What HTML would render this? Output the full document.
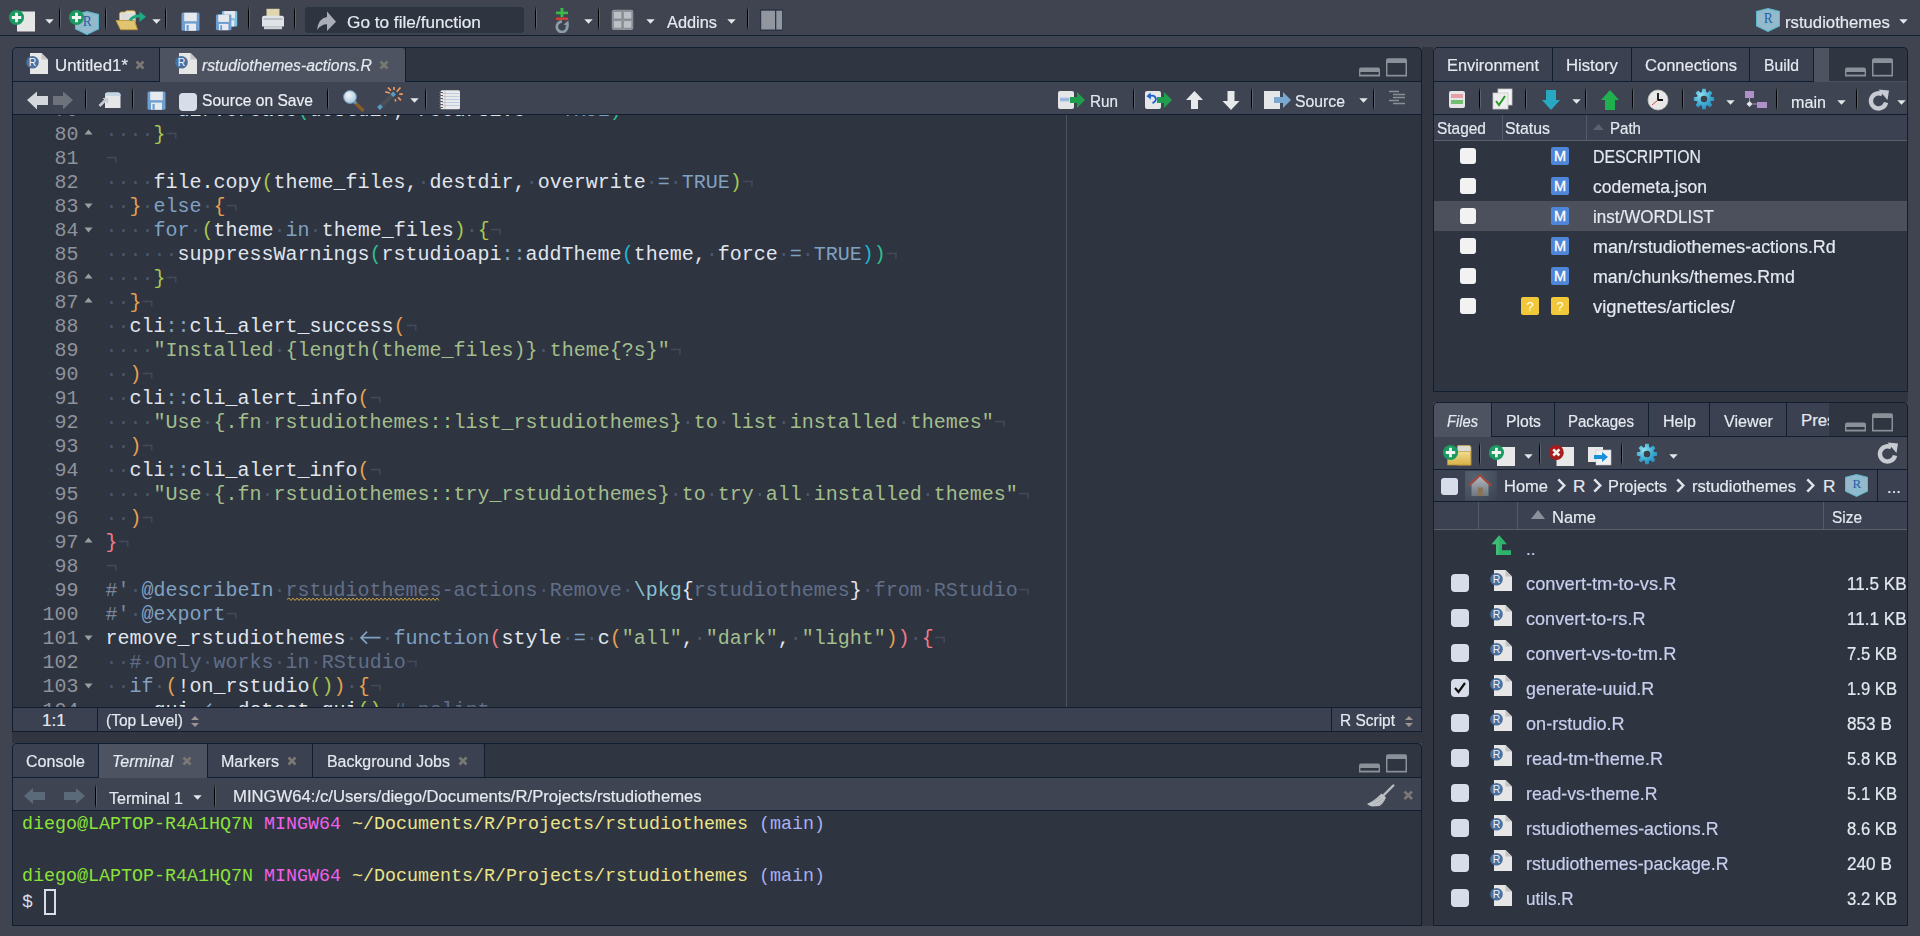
<!DOCTYPE html><html><head><meta charset="utf-8"><style>
*{margin:0;padding:0;box-sizing:border-box}
html,body{width:1920px;height:936px;overflow:hidden;background:#3f4450}
body{position:relative;font-family:"Liberation Sans",sans-serif}
.a{position:absolute;display:block}
.t{position:absolute;white-space:pre;font-family:"Liberation Sans",sans-serif;-webkit-text-stroke:0.2px currentColor}
.m{position:absolute;white-space:pre;font-family:"Liberation Mono",monospace}
</style></head><body><div class="a" style="left:0px;top:0px;width:1920px;height:35px;background:#3f4450;"></div>
<div class="a" style="left:0px;top:35px;width:1920px;height:1px;background:#101e2f;"></div>
<svg class="a" style="left:8px;top:9px;" width="30" height="24" viewBox="0 0 30 24"><rect x="9" y="2.5" width="18" height="20" fill="#e6e6e6"/><circle cx="8.5" cy="8.5" r="7.6" fill="#1a9a60"/><path d="M8.5 3.8V13.2M3.8 8.5H13.2" stroke="#f2f2f2" stroke-width="2.8"/></svg>
<svg class="a" style="left:45px;top:19px;" width="9" height="5" viewBox="0 0 9 5"><path d="M0.3 0.3H8.7L4.5 4.7Z" fill="#e4e6ea"/></svg>
<div class="a" style="left:59px;top:6px;width:3px;height:25px;background:linear-gradient(90deg,#000 0,#000 1.4px,rgba(160,168,180,0.3) 1.4px,rgba(160,168,180,0.3) 2.4px,transparent 2.4px);-webkit-mask-image:linear-gradient(180deg,transparent 0,#000 22%,#000 78%,transparent 100%)"></div>
<svg class="a" style="left:75px;top:11px;" width="24" height="24" viewBox="0 0 24 24"><g transform="scale(1.0435)"><path d="M11.5 0.5L22.5 3.3V17.2L11.5 22.5L0.5 17.2V3.3Z" fill="#a6cfe0" fill-opacity="0.85" stroke="#5cb6cc" stroke-width="1"/>
<path d="M0.5 3.3L11.5 6L22.5 3.3M11.5 1V22.5M0.5 17.2L11.5 14.5L22.5 17.2" stroke="#6cc0d4" stroke-width="0.6" fill="none" opacity="0.8"/>
<text x="11.8" y="14" text-anchor="middle" font-family="Liberation Serif" font-size="13" fill="#2a5ba8">R</text></g></svg>
<svg class="a" style="left:68px;top:9px;" width="17" height="17" viewBox="0 0 17 17"><circle cx="8.5" cy="8.5" r="7.6" fill="#1a9a60"/><path d="M8.5 3.8V13.2M3.8 8.5H13.2" stroke="#f2f2f2" stroke-width="2.8"/></svg>
<div class="a" style="left:105px;top:6px;width:3px;height:25px;background:linear-gradient(90deg,#000 0,#000 1.4px,rgba(160,168,180,0.3) 1.4px,rgba(160,168,180,0.3) 2.4px,transparent 2.4px);-webkit-mask-image:linear-gradient(180deg,transparent 0,#000 22%,#000 78%,transparent 100%)"></div>
<svg class="a" style="left:114px;top:10px;" width="34" height="22" viewBox="0 0 34 22"><path d="M5.5 4Q5.5 2 7.5 2H11L12.5 0.8H19.5Q21.5 0.8 21.5 3V12H5.5Z" fill="#f0e8c8" stroke="#c8a040" stroke-width="0.9"/>
<rect x="6.8" y="2.8" width="14" height="11" fill="#dcdcdc"/>
<path d="M2 10.5H20.5L23.5 19.7H6.5Z" fill="#e0c470" stroke="#c09838" stroke-width="0.9"/>
<path d="M16 10.5Q19 5.8 26 6" stroke="#20a880" stroke-width="3.2" fill="none"/><path d="M25.5 1.5L32 6.8L25.5 12Z" fill="#20a880"/></svg>
<svg class="a" style="left:152px;top:19px;" width="9" height="5" viewBox="0 0 9 5"><path d="M0.3 0.3H8.7L4.5 4.7Z" fill="#e4e6ea"/></svg>
<div class="a" style="left:165px;top:6px;width:3px;height:25px;background:linear-gradient(90deg,#000 0,#000 1.4px,rgba(160,168,180,0.3) 1.4px,rgba(160,168,180,0.3) 2.4px,transparent 2.4px);-webkit-mask-image:linear-gradient(180deg,transparent 0,#000 22%,#000 78%,transparent 100%)"></div>
<svg class="a" style="left:181px;top:12px;" width="20" height="20" viewBox="0 0 20 20"><rect x="0.5" y="0.5" width="18" height="18.3" rx="1.5" fill="#6f9fd0"/><rect x="3.2" y="0.8" width="12.6" height="8.4" fill="#e6e9ee"/><rect x="4" y="11.6" width="11" height="7.2" fill="#e6e9ee"/><rect x="5.5" y="13" width="2.2" height="5.8" fill="#6f9fd0"/></svg>
<svg class="a" style="left:215px;top:9px;" width="26" height="24" viewBox="0 0 26 24"><g transform="translate(6.5,1.5) scale(0.85)"><rect x="0.5" y="0.5" width="18" height="18.3" rx="1.5" fill="#7cc2e4"/><rect x="3.2" y="0.8" width="12.6" height="8.4" fill="#e6e9ee"/><rect x="4" y="11.6" width="11" height="7.2" fill="#e6e9ee"/></g><g transform="translate(0.5,5) scale(0.86)"><rect x="0.5" y="0.5" width="18" height="18.3" rx="1.5" fill="#6f9fd0"/><rect x="3.2" y="0.8" width="12.6" height="8.4" fill="#e6e9ee"/><rect x="4" y="11.6" width="11" height="7.2" fill="#e6e9ee"/><rect x="5.5" y="13" width="2.2" height="5.8" fill="#6f9fd0"/></g></svg>
<div class="a" style="left:248px;top:6px;width:3px;height:25px;background:linear-gradient(90deg,#000 0,#000 1.4px,rgba(160,168,180,0.3) 1.4px,rgba(160,168,180,0.3) 2.4px,transparent 2.4px);-webkit-mask-image:linear-gradient(180deg,transparent 0,#000 22%,#000 78%,transparent 100%)"></div>
<svg class="a" style="left:261px;top:7px;" width="24" height="24" viewBox="0 0 24 24"><rect x="5.5" y="1.8" width="13" height="10.5" fill="#e2d6ae"/><path d="M1 11Q1 8.8 3 8.8H21Q23 8.8 23 11V19.5H1Z" fill="#dfe2e6"/><rect x="2.5" y="11.5" width="19" height="1" fill="#9aa0a8"/><rect x="3" y="19.2" width="18" height="3" fill="#cdd1d6"/></svg>
<div class="a" style="left:294px;top:6px;width:3px;height:25px;background:linear-gradient(90deg,#000 0,#000 1.4px,rgba(160,168,180,0.3) 1.4px,rgba(160,168,180,0.3) 2.4px,transparent 2.4px);-webkit-mask-image:linear-gradient(180deg,transparent 0,#000 22%,#000 78%,transparent 100%)"></div>
<div class="a" style="left:305px;top:7px;width:219px;height:26px;background:#2e3440;border-radius:4px;box-shadow:inset 0 0 0 1px #2a3644"></div>
<svg class="a" style="left:316px;top:11px;" width="22" height="22" viewBox="0 0 22 22"><path d="M1 19Q2.5 7 11 6V0.5L20 10.8L11 20V13.3Q5 13.3 1 19Z" fill="#a9aeb6"/></svg>
<div class="t" style="left:347.00px;top:14.34px;font-size:17.200px;line-height:17.200px;color:#e5e9f0;transform:scaleX(1.0011);transform-origin:0 0;">Go to file/function</div>
<div class="a" style="left:535px;top:6px;width:3px;height:25px;background:linear-gradient(90deg,#000 0,#000 1.4px,rgba(160,168,180,0.3) 1.4px,rgba(160,168,180,0.3) 2.4px,transparent 2.4px);-webkit-mask-image:linear-gradient(180deg,transparent 0,#000 22%,#000 78%,transparent 100%)"></div>
<svg class="a" style="left:555px;top:7px;" width="16" height="26" viewBox="0 0 16 26"><rect x="5.5" y="1" width="2.9" height="9" fill="#3cb84a"/><rect x="1" y="4.6" width="12" height="2.6" fill="#3cb84a"/><rect x="1" y="10.5" width="12" height="2.6" fill="#d0403a"/>
<path d="M7 14.6A5.2 5.2 0 1 0 12 18.5" stroke="#8c9ca8" stroke-width="2.7" fill="none"/><path d="M8.6 17.5L13.4 13.6L14 19.6Z" fill="#8c9ca8"/></svg>
<svg class="a" style="left:584px;top:19px;" width="9" height="5" viewBox="0 0 9 5"><path d="M0.3 0.3H8.7L4.5 4.7Z" fill="#e4e6ea"/></svg>
<div class="a" style="left:598px;top:6px;width:3px;height:25px;background:linear-gradient(90deg,#000 0,#000 1.4px,rgba(160,168,180,0.3) 1.4px,rgba(160,168,180,0.3) 2.4px,transparent 2.4px);-webkit-mask-image:linear-gradient(180deg,transparent 0,#000 22%,#000 78%,transparent 100%)"></div>
<svg class="a" style="left:611px;top:9px;" width="24" height="22" viewBox="0 0 24 22"><rect x="0.8" y="0.8" width="21.5" height="20.3" rx="2" fill="#8e9299"/>
<rect x="2.4" y="2.4" width="8.4" height="7.6" rx="1.2" fill="#bcc0c6" stroke="#777c84" stroke-width="0.6"/><rect x="12.4" y="2.4" width="8.4" height="7.6" rx="1.2" fill="#bcc0c6" stroke="#777c84" stroke-width="0.6"/>
<rect x="2.4" y="11.6" width="8.4" height="7.6" rx="1.2" fill="#bcc0c6" stroke="#777c84" stroke-width="0.6"/><rect x="12.4" y="11.6" width="8.4" height="7.6" rx="1.2" fill="#bcc0c6" stroke="#777c84" stroke-width="0.6"/></svg>
<svg class="a" style="left:646px;top:19px;" width="9" height="5" viewBox="0 0 9 5"><path d="M0.3 0.3H8.7L4.5 4.7Z" fill="#e4e6ea"/></svg>
<div class="t" style="left:667.00px;top:14.34px;font-size:17.200px;line-height:17.200px;color:#e5e9f0;transform:scaleX(0.9507);transform-origin:0 0;">Addins</div>
<svg class="a" style="left:727px;top:19px;" width="9" height="5" viewBox="0 0 9 5"><path d="M0.3 0.3H8.7L4.5 4.7Z" fill="#e4e6ea"/></svg>
<div class="a" style="left:747px;top:6px;width:3px;height:25px;background:linear-gradient(90deg,#000 0,#000 1.4px,rgba(160,168,180,0.3) 1.4px,rgba(160,168,180,0.3) 2.4px,transparent 2.4px);-webkit-mask-image:linear-gradient(180deg,transparent 0,#000 22%,#000 78%,transparent 100%)"></div>
<svg class="a" style="left:760px;top:9px;" width="23" height="22" viewBox="0 0 23 22"><rect x="0" y="0" width="23" height="22" fill="#2c3646"/><rect x="1.2" y="1.7" width="13.8" height="18.8" fill="#92969e"/><rect x="16.3" y="1.7" width="5.8" height="18.8" fill="#92969e"/></svg>
<svg class="a" style="left:1756px;top:8px;" width="24" height="24" viewBox="0 0 24 24"><g transform="scale(1.0435)"><path d="M11.5 0.5L22.5 3.3V17.2L11.5 22.5L0.5 17.2V3.3Z" fill="#a6cfe0" fill-opacity="0.85" stroke="#5cb6cc" stroke-width="1"/>
<path d="M0.5 3.3L11.5 6L22.5 3.3M11.5 1V22.5M0.5 17.2L11.5 14.5L22.5 17.2" stroke="#6cc0d4" stroke-width="0.6" fill="none" opacity="0.8"/>
<text x="11.8" y="14" text-anchor="middle" font-family="Liberation Serif" font-size="13" fill="#2a5ba8">R</text></g></svg>
<div class="t" style="left:1785.00px;top:14.34px;font-size:17.200px;line-height:17.200px;color:#e5e9f0;transform:scaleX(0.9719);transform-origin:0 0;">rstudiothemes</div>
<svg class="a" style="left:1899px;top:19px;" width="9" height="5" viewBox="0 0 9 5"><path d="M0.3 0.3H8.7L4.5 4.7Z" fill="#e4e6ea"/></svg>
<div class="a" style="left:1422px;top:47px;width:11px;height:879px;background:#30353f;"></div>
<div class="a" style="left:12px;top:732px;width:1421px;height:11px;background:#30353f;"></div>
<div class="a" style="left:1422px;top:392px;width:486px;height:10px;background:#30353f;"></div>
<div class="a" style="left:12px;top:47px;width:1410px;height:685px;background:#101e2f;border-radius:5px 5px 0 0"></div>
<div class="a" style="left:13px;top:48px;width:1408px;height:33px;background:#2f3541;border-radius:4px 4px 0 0"></div>
<div class="a" style="left:13px;top:48px;width:146px;height:33px;background:#3b4150;border-top-left-radius:4px"></div>
<div class="a" style="left:159px;top:48px;width:1px;height:33px;background:#101e2f;"></div>
<div class="a" style="left:160px;top:48px;width:245px;height:34px;background:#4d5360;border-top-right-radius:3px"></div>
<div class="a" style="left:405px;top:48px;width:1px;height:33px;background:#101e2f;"></div>
<svg class="a" style="left:26px;top:52px;" width="22" height="23" viewBox="0 0 22 23"><path d="M4 1H15.5L22 7.5V22H4Z" fill="#e6e6e6"/><path d="M15.5 1V7.5H22" fill="#c4c4c4"/><circle cx="6.5" cy="10.2" r="6.3" fill="#4a70a0"/><text x="6.5" y="14" text-anchor="middle" font-family="Liberation Sans" font-size="10.5" fill="#eef2f6">R</text></svg>
<div class="t" style="left:55.00px;top:57.34px;font-size:17.200px;line-height:17.200px;color:#e5e9f0;transform:scaleX(0.9788);transform-origin:0 0;">Untitled1*</div>
<svg class="a" style="left:135px;top:60px;" width="10" height="10" viewBox="0 0 10 10"><path d="M1.5 1.5L8.5 8.5M8.5 1.5L1.5 8.5" stroke="#7a7873" stroke-width="2.7"/></svg>
<svg class="a" style="left:175px;top:52px;" width="22" height="23" viewBox="0 0 22 23"><path d="M4 1H15.5L22 7.5V22H4Z" fill="#e6e6e6"/><path d="M15.5 1V7.5H22" fill="#c4c4c4"/><circle cx="6.5" cy="10.2" r="6.3" fill="#4a70a0"/><text x="6.5" y="14" text-anchor="middle" font-family="Liberation Sans" font-size="10.5" fill="#eef2f6">R</text></svg>
<div class="t" style="left:202.00px;top:57.34px;font-size:17.200px;line-height:17.200px;color:#e5e9f0;font-style:italic;transform:scaleX(0.9166);transform-origin:0 0;">rstudiothemes-actions.R</div>
<svg class="a" style="left:379px;top:60px;" width="10" height="10" viewBox="0 0 10 10"><path d="M1.5 1.5L8.5 8.5M8.5 1.5L1.5 8.5" stroke="#7a7873" stroke-width="2.7"/></svg>
<svg class="a" style="left:1359px;top:67px;" width="22" height="10" viewBox="0 0 22 10"><path d="M0 9.6V2.5Q0 0.5 2 0.5H19Q21 0.5 21 2.5V9.6Z" fill="#8a9199"/><rect x="1.4" y="5" width="18.2" height="2.6" fill="#2f3541"/></svg>
<svg class="a" style="left:1386px;top:58px;" width="22" height="19" viewBox="0 0 22 19"><path d="M0 18.6V2.3Q0 0.3 2 0.3H19Q21 0.3 21 2.3V18.6Z" fill="#8a9199"/><rect x="1.5" y="5" width="18" height="11.8" fill="#2f3541"/></svg>
<div class="a" style="left:13px;top:82px;width:1408px;height:32px;background:#3e4451;"></div>
<svg class="a" style="left:26px;top:90px;" width="48" height="21" viewBox="0 0 48 21"><path d="M1 10L11 1.5V6H22V15H11V19.5Z" fill="#d4d7db"/><path d="M47 10L37 1.5V6H27V15H37V19.5Z" fill="#6e737b"/></svg>
<div class="a" style="left:85px;top:87px;width:3px;height:24px;background:linear-gradient(90deg,#000 0,#000 1.4px,rgba(160,168,180,0.3) 1.4px,rgba(160,168,180,0.3) 2.4px,transparent 2.4px);-webkit-mask-image:linear-gradient(180deg,transparent 0,#000 22%,#000 78%,transparent 100%)"></div>
<svg class="a" style="left:97px;top:89px;" width="25" height="22" viewBox="0 0 25 22"><path d="M8 19V6Q8 3.5 10.5 3.5H21Q23.5 3.5 23.5 6V19Z" fill="#e4e6e8"/><path d="M8 7V6Q8 3.5 10.5 3.5H21Q23.5 3.5 23.5 6V7Z" fill="#c2d6e6"/><path d="M2.5 17L9.5 10" stroke="#c8ccd0" stroke-width="2.6"/><path d="M5.5 9H11.2V14.7Z" fill="#c8ccd0"/></svg>
<div class="a" style="left:132px;top:87px;width:3px;height:24px;background:linear-gradient(90deg,#000 0,#000 1.4px,rgba(160,168,180,0.3) 1.4px,rgba(160,168,180,0.3) 2.4px,transparent 2.4px);-webkit-mask-image:linear-gradient(180deg,transparent 0,#000 22%,#000 78%,transparent 100%)"></div>
<svg class="a" style="left:147px;top:91px;" width="20" height="20" viewBox="0 0 20 20"><rect x="0.5" y="0.5" width="18" height="18.3" rx="1.5" fill="#6f9fd0"/><rect x="3.2" y="0.8" width="12.6" height="8.4" fill="#e6e9ee"/><rect x="4" y="11.6" width="11" height="7.2" fill="#e6e9ee"/><rect x="5.5" y="13" width="2.2" height="5.8" fill="#6f9fd0"/></svg>
<div class="a" style="left:179px;top:93px;width:18px;height:18px;background:#d8dee9;border-radius:4px"></div>
<div class="t" style="left:202.00px;top:92.34px;font-size:17.200px;line-height:17.200px;color:#eceff4;transform:scaleX(0.9069);transform-origin:0 0;">Source on Save</div>
<div class="a" style="left:327px;top:87px;width:3px;height:24px;background:linear-gradient(90deg,#000 0,#000 1.4px,rgba(160,168,180,0.3) 1.4px,rgba(160,168,180,0.3) 2.4px,transparent 2.4px);-webkit-mask-image:linear-gradient(180deg,transparent 0,#000 22%,#000 78%,transparent 100%)"></div>
<svg class="a" style="left:342px;top:89px;" width="24" height="24" viewBox="0 0 24 24"><defs><radialGradient id="lg" cx="0.4" cy="0.35" r="0.7"><stop offset="0" stop-color="#f2f6f9"/><stop offset="1" stop-color="#a8c4dc"/></radialGradient></defs><path d="M12.5 13L20.5 21" stroke="#8a5a28" stroke-width="3.2" stroke-linecap="round"/><path d="M12 12.5L14 14.5" stroke="#5a9ac0" stroke-width="3"/><circle cx="8" cy="8" r="6.4" fill="url(#lg)" stroke="#6f9ab8" stroke-width="1"/></svg>
<svg class="a" style="left:376px;top:85px;" width="28" height="27" viewBox="0 0 28 27"><path d="M2.5 23.5L18.5 8" stroke="#4a4f56" stroke-width="4"/><path d="M2.5 23.5L5.5 20.6M15.8 10.6L18.5 8" stroke="#5a9ac4" stroke-width="4"/><path d="M12 2.5L15 5.6M18 2V5M24.5 2.5L20.6 6.8M23.3 9.2H26.8M22 12.3L24.9 15.4M19 14.2L19.8 16.6M9.2 6.8L13.9 8" stroke="#f09a60" stroke-width="1.7"/></svg>
<svg class="a" style="left:410px;top:98px;" width="9" height="5" viewBox="0 0 9 5"><path d="M0.3 0.3H8.7L4.5 4.7Z" fill="#e4e6ea"/></svg>
<div class="a" style="left:425px;top:87px;width:3px;height:24px;background:linear-gradient(90deg,#000 0,#000 1.4px,rgba(160,168,180,0.3) 1.4px,rgba(160,168,180,0.3) 2.4px,transparent 2.4px);-webkit-mask-image:linear-gradient(180deg,transparent 0,#000 22%,#000 78%,transparent 100%)"></div>
<svg class="a" style="left:438px;top:89px;" width="23" height="22" viewBox="0 0 23 22"><rect x="2.5" y="1.2" width="19.5" height="19" rx="1.5" fill="#e8eaec"/><path d="M4 4.5H21.5M4 7.5H21.5M4 10.5H21.5M4 13.5H21.5M4 16.5H21.5" stroke="#a8c0d8" stroke-width="0.7"/><path d="M7 1.5V20" stroke="#e8a0a0" stroke-width="0.6"/><path d="M1 3.5H5M1 6.5H5M1 9.5H5M1 12.5H5M1 15.5H5M1 18.5H5" stroke="#5a5f66" stroke-width="1.2"/></svg>
<svg class="a" style="left:1057px;top:90px;" width="30" height="20" viewBox="0 0 30 20"><rect x="1" y="1" width="16" height="18" rx="2" fill="#e4e6e8"/><rect x="3" y="7.5" width="9.5" height="4" fill="#a8c0e4"/><path d="M3.5 9.5H12" stroke="#7f9fd0" stroke-width="0.6"/><path d="M13 7H20V2L28 10L20 18V13H13Z" fill="#1f9e4e"/></svg>
<div class="t" style="left:1090.00px;top:93.34px;font-size:17.200px;line-height:17.200px;color:#e5e9f0;transform:scaleX(0.8874);transform-origin:0 0;">Run</div>
<div class="a" style="left:1133px;top:87px;width:3px;height:24px;background:linear-gradient(90deg,#000 0,#000 1.4px,rgba(160,168,180,0.3) 1.4px,rgba(160,168,180,0.3) 2.4px,transparent 2.4px);-webkit-mask-image:linear-gradient(180deg,transparent 0,#000 22%,#000 78%,transparent 100%)"></div>
<svg class="a" style="left:1144px;top:90px;" width="30" height="20" viewBox="0 0 30 20"><rect x="1" y="1" width="16" height="18" rx="2" fill="#e4e6e8"/><path d="M5 6Q11 4.5 11.8 8.5Q12.3 11.5 8.5 13" stroke="#1f5fd0" stroke-width="1.9" fill="none"/><path d="M2.5 6.2L6.5 2.5L7 9.5Z" fill="#1f5fd0"/><path d="M13 7H20V2L28 10L20 18V13H13Z" fill="#1f9e4e"/></svg>
<svg class="a" style="left:1185px;top:90px;" width="19" height="20" viewBox="0 0 19 20"><path d="M9.5 1L18 10H13V19H6V10H1Z" fill="#e6e8ea"/></svg>
<svg class="a" style="left:1221px;top:90px;" width="20" height="21" viewBox="0 0 20 21"><path d="M10 20L1.5 11H6.5V1H13.5V11H18.5Z" fill="#e6e8ea"/></svg>
<div class="a" style="left:1251px;top:87px;width:3px;height:24px;background:linear-gradient(90deg,#000 0,#000 1.4px,rgba(160,168,180,0.3) 1.4px,rgba(160,168,180,0.3) 2.4px,transparent 2.4px);-webkit-mask-image:linear-gradient(180deg,transparent 0,#000 22%,#000 78%,transparent 100%)"></div>
<svg class="a" style="left:1263px;top:90px;" width="30" height="20" viewBox="0 0 30 20"><rect x="1" y="1" width="16" height="18" fill="#e4e6e8"/><path d="M11 7H20V2L28 10L20 18V13H11Z" fill="#7aa8d0"/></svg>
<div class="t" style="left:1295.00px;top:93.34px;font-size:17.200px;line-height:17.200px;color:#e5e9f0;transform:scaleX(0.9174);transform-origin:0 0;">Source</div>
<svg class="a" style="left:1359px;top:98px;" width="9" height="5" viewBox="0 0 9 5"><path d="M0.3 0.3H8.7L4.5 4.7Z" fill="#e4e6ea"/></svg>
<div class="a" style="left:1373px;top:87px;width:3px;height:24px;background:linear-gradient(90deg,#000 0,#000 1.4px,rgba(160,168,180,0.3) 1.4px,rgba(160,168,180,0.3) 2.4px,transparent 2.4px);-webkit-mask-image:linear-gradient(180deg,transparent 0,#000 22%,#000 78%,transparent 100%)"></div>
<svg class="a" style="left:1389px;top:90px;" width="18" height="16" viewBox="0 0 18 16"><path d="M0 1.5H10M4 4.5H16M4 7.5H16M0 10.5H10M4 13.5H16" stroke="#8b8f95" stroke-width="1.4"/></svg>
<div class="a" style="left:13px;top:115px;width:1408px;height:592px;background:#2e3440;"></div>
<div class="a" style="left:1066px;top:115px;width:1px;height:592px;background:#4a5160;"></div>
<div class="a" style="left:13px;top:115px;width:1052px;height:592px;overflow:hidden">
<div class="m" style="left:29.5px;top:-14.32px;width:36px;text-align:right;font-size:20px;line-height:20px;color:#8e939b">79</div>
<div class="m" style="left:92.5px;top:-14.32px;font-size:20px;line-height:20px"><span style="color:#4c566a">······</span><span style="color:#e0e5ee">dir.create</span><span style="color:#2fc08c">(</span><span style="color:#e0e5ee">destdir,<span style="color:#4c566a">·</span>recursive<span style="color:#4c566a">·</span></span><span style="color:#81a1c1">=</span><span style="color:#e0e5ee"><span style="color:#4c566a">·</span></span><span style="color:#81a1c1">TRUE</span><span style="color:#2fc08c">)</span><span style="color:#434b5a">¬</span></div>
<div class="m" style="left:29.5px;top:9.68px;width:36px;text-align:right;font-size:20px;line-height:20px;color:#8e939b">80</div>
<svg class="a" style="left:71px;top:14px" width="9" height="6"><path d="M0.5 5.5L4.5 0.5L8.5 5.5Z" fill="#9c9d9f"/></svg>
<div class="m" style="left:92.5px;top:9.68px;font-size:20px;line-height:20px"><span style="color:#4c566a">····</span><span style="color:#a8c650">}</span><span style="color:#434b5a">¬</span></div>
<div class="m" style="left:29.5px;top:33.68px;width:36px;text-align:right;font-size:20px;line-height:20px;color:#8e939b">81</div>
<div class="m" style="left:92.5px;top:33.68px;font-size:20px;line-height:20px"><span style="color:#4c566a"></span><span style="color:#434b5a">¬</span></div>
<div class="m" style="left:29.5px;top:57.68px;width:36px;text-align:right;font-size:20px;line-height:20px;color:#8e939b">82</div>
<div class="m" style="left:92.5px;top:57.68px;font-size:20px;line-height:20px"><span style="color:#4c566a">····</span><span style="color:#e0e5ee">file.copy</span><span style="color:#a8c650">(</span><span style="color:#e0e5ee">theme_files,<span style="color:#4c566a">·</span>destdir,<span style="color:#4c566a">·</span>overwrite<span style="color:#4c566a">·</span></span><span style="color:#81a1c1">=</span><span style="color:#e0e5ee"><span style="color:#4c566a">·</span></span><span style="color:#81a1c1">TRUE</span><span style="color:#a8c650">)</span><span style="color:#434b5a">¬</span></div>
<div class="m" style="left:29.5px;top:81.68px;width:36px;text-align:right;font-size:20px;line-height:20px;color:#8e939b">83</div>
<svg class="a" style="left:71px;top:88px" width="9" height="6"><path d="M0.5 0.5H8.5L4.5 5.5Z" fill="#9c9d9f"/></svg>
<div class="m" style="left:92.5px;top:81.68px;font-size:20px;line-height:20px"><span style="color:#4c566a">··</span><span style="color:#e5a050">}</span><span style="color:#e0e5ee"><span style="color:#4c566a">·</span></span><span style="color:#81a1c1">else</span><span style="color:#e0e5ee"><span style="color:#4c566a">·</span></span><span style="color:#e5a050">{</span><span style="color:#434b5a">¬</span></div>
<div class="m" style="left:29.5px;top:105.68px;width:36px;text-align:right;font-size:20px;line-height:20px;color:#8e939b">84</div>
<svg class="a" style="left:71px;top:112px" width="9" height="6"><path d="M0.5 0.5H8.5L4.5 5.5Z" fill="#9c9d9f"/></svg>
<div class="m" style="left:92.5px;top:105.68px;font-size:20px;line-height:20px"><span style="color:#4c566a">····</span><span style="color:#81a1c1">for</span><span style="color:#e0e5ee"><span style="color:#4c566a">·</span></span><span style="color:#a8c650">(</span><span style="color:#e0e5ee">theme<span style="color:#4c566a">·</span></span><span style="color:#81a1c1">in</span><span style="color:#e0e5ee"><span style="color:#4c566a">·</span>theme_files</span><span style="color:#a8c650">)</span><span style="color:#e0e5ee"><span style="color:#4c566a">·</span></span><span style="color:#a8c650">{</span><span style="color:#434b5a">¬</span></div>
<div class="m" style="left:29.5px;top:129.68px;width:36px;text-align:right;font-size:20px;line-height:20px;color:#8e939b">85</div>
<div class="m" style="left:92.5px;top:129.68px;font-size:20px;line-height:20px"><span style="color:#4c566a">······</span><span style="color:#e0e5ee">suppressWarnings</span><span style="color:#2fc08c">(</span><span style="color:#e0e5ee">rstudioapi</span><span style="color:#81a1c1">::</span><span style="color:#e0e5ee">addTheme</span><span style="color:#20b4d4">(</span><span style="color:#e0e5ee">theme,<span style="color:#4c566a">·</span>force<span style="color:#4c566a">·</span></span><span style="color:#81a1c1">=</span><span style="color:#e0e5ee"><span style="color:#4c566a">·</span></span><span style="color:#81a1c1">TRUE</span><span style="color:#20b4d4">)</span><span style="color:#2fc08c">)</span><span style="color:#434b5a">¬</span></div>
<div class="m" style="left:29.5px;top:153.68px;width:36px;text-align:right;font-size:20px;line-height:20px;color:#8e939b">86</div>
<svg class="a" style="left:71px;top:158px" width="9" height="6"><path d="M0.5 5.5L4.5 0.5L8.5 5.5Z" fill="#9c9d9f"/></svg>
<div class="m" style="left:92.5px;top:153.68px;font-size:20px;line-height:20px"><span style="color:#4c566a">····</span><span style="color:#a8c650">}</span><span style="color:#434b5a">¬</span></div>
<div class="m" style="left:29.5px;top:177.68px;width:36px;text-align:right;font-size:20px;line-height:20px;color:#8e939b">87</div>
<svg class="a" style="left:71px;top:182px" width="9" height="6"><path d="M0.5 5.5L4.5 0.5L8.5 5.5Z" fill="#9c9d9f"/></svg>
<div class="m" style="left:92.5px;top:177.68px;font-size:20px;line-height:20px"><span style="color:#4c566a">··</span><span style="color:#e5a050">}</span><span style="color:#434b5a">¬</span></div>
<div class="m" style="left:29.5px;top:201.68px;width:36px;text-align:right;font-size:20px;line-height:20px;color:#8e939b">88</div>
<div class="m" style="left:92.5px;top:201.68px;font-size:20px;line-height:20px"><span style="color:#4c566a">··</span><span style="color:#e0e5ee">cli</span><span style="color:#81a1c1">::</span><span style="color:#e0e5ee">cli_alert_success</span><span style="color:#e5a050">(</span><span style="color:#434b5a">¬</span></div>
<div class="m" style="left:29.5px;top:225.68px;width:36px;text-align:right;font-size:20px;line-height:20px;color:#8e939b">89</div>
<div class="m" style="left:92.5px;top:225.68px;font-size:20px;line-height:20px"><span style="color:#4c566a">····</span><span style="color:#a3be8c">&quot;Installed<span style="color:#4c566a">·</span>{length(theme_files)}<span style="color:#4c566a">·</span>theme{?s}&quot;</span><span style="color:#434b5a">¬</span></div>
<div class="m" style="left:29.5px;top:249.68px;width:36px;text-align:right;font-size:20px;line-height:20px;color:#8e939b">90</div>
<div class="m" style="left:92.5px;top:249.68px;font-size:20px;line-height:20px"><span style="color:#4c566a">··</span><span style="color:#e5a050">)</span><span style="color:#434b5a">¬</span></div>
<div class="m" style="left:29.5px;top:273.68px;width:36px;text-align:right;font-size:20px;line-height:20px;color:#8e939b">91</div>
<div class="m" style="left:92.5px;top:273.68px;font-size:20px;line-height:20px"><span style="color:#4c566a">··</span><span style="color:#e0e5ee">cli</span><span style="color:#81a1c1">::</span><span style="color:#e0e5ee">cli_alert_info</span><span style="color:#e5a050">(</span><span style="color:#434b5a">¬</span></div>
<div class="m" style="left:29.5px;top:297.68px;width:36px;text-align:right;font-size:20px;line-height:20px;color:#8e939b">92</div>
<div class="m" style="left:92.5px;top:297.68px;font-size:20px;line-height:20px"><span style="color:#4c566a">····</span><span style="color:#a3be8c">&quot;Use<span style="color:#4c566a">·</span>{.fn<span style="color:#4c566a">·</span>rstudiothemes::list_rstudiothemes}<span style="color:#4c566a">·</span>to<span style="color:#4c566a">·</span>list<span style="color:#4c566a">·</span>installed<span style="color:#4c566a">·</span>themes&quot;</span><span style="color:#434b5a">¬</span></div>
<div class="m" style="left:29.5px;top:321.68px;width:36px;text-align:right;font-size:20px;line-height:20px;color:#8e939b">93</div>
<div class="m" style="left:92.5px;top:321.68px;font-size:20px;line-height:20px"><span style="color:#4c566a">··</span><span style="color:#e5a050">)</span><span style="color:#434b5a">¬</span></div>
<div class="m" style="left:29.5px;top:345.68px;width:36px;text-align:right;font-size:20px;line-height:20px;color:#8e939b">94</div>
<div class="m" style="left:92.5px;top:345.68px;font-size:20px;line-height:20px"><span style="color:#4c566a">··</span><span style="color:#e0e5ee">cli</span><span style="color:#81a1c1">::</span><span style="color:#e0e5ee">cli_alert_info</span><span style="color:#e5a050">(</span><span style="color:#434b5a">¬</span></div>
<div class="m" style="left:29.5px;top:369.68px;width:36px;text-align:right;font-size:20px;line-height:20px;color:#8e939b">95</div>
<div class="m" style="left:92.5px;top:369.68px;font-size:20px;line-height:20px"><span style="color:#4c566a">····</span><span style="color:#a3be8c">&quot;Use<span style="color:#4c566a">·</span>{.fn<span style="color:#4c566a">·</span>rstudiothemes::try_rstudiothemes}<span style="color:#4c566a">·</span>to<span style="color:#4c566a">·</span>try<span style="color:#4c566a">·</span>all<span style="color:#4c566a">·</span>installed<span style="color:#4c566a">·</span>themes&quot;</span><span style="color:#434b5a">¬</span></div>
<div class="m" style="left:29.5px;top:393.68px;width:36px;text-align:right;font-size:20px;line-height:20px;color:#8e939b">96</div>
<div class="m" style="left:92.5px;top:393.68px;font-size:20px;line-height:20px"><span style="color:#4c566a">··</span><span style="color:#e5a050">)</span><span style="color:#434b5a">¬</span></div>
<div class="m" style="left:29.5px;top:417.68px;width:36px;text-align:right;font-size:20px;line-height:20px;color:#8e939b">97</div>
<svg class="a" style="left:71px;top:422px" width="9" height="6"><path d="M0.5 5.5L4.5 0.5L8.5 5.5Z" fill="#9c9d9f"/></svg>
<div class="m" style="left:92.5px;top:417.68px;font-size:20px;line-height:20px"><span style="color:#4c566a"></span><span style="color:#ee7a8a">}</span><span style="color:#434b5a">¬</span></div>
<div class="m" style="left:29.5px;top:441.68px;width:36px;text-align:right;font-size:20px;line-height:20px;color:#8e939b">98</div>
<div class="m" style="left:92.5px;top:441.68px;font-size:20px;line-height:20px"><span style="color:#4c566a"></span><span style="color:#434b5a">¬</span></div>
<div class="m" style="left:29.5px;top:465.68px;width:36px;text-align:right;font-size:20px;line-height:20px;color:#8e939b">99</div>
<div class="m" style="left:92.5px;top:465.68px;font-size:20px;line-height:20px"><span style="color:#4c566a"></span><span style="color:#7d8799">#&#x27;</span><span style="color:#616e88"><span style="color:#4c566a">·</span></span><span style="color:#81a1c1">@describeIn</span><span style="color:#616e88"><span style="color:#4c566a">·</span>rstudiothemes-actions<span style="color:#4c566a">·</span>Remove<span style="color:#4c566a">·</span></span><span style="color:#88c0d0">\pkg</span><span style="color:#e0e5ee">{</span><span style="color:#616e88">rstudiothemes</span><span style="color:#e0e5ee">}</span><span style="color:#616e88"><span style="color:#4c566a">·</span>from<span style="color:#4c566a">·</span>RStudio</span><span style="color:#434b5a">¬</span></div>
<div class="m" style="left:29.5px;top:489.68px;width:36px;text-align:right;font-size:20px;line-height:20px;color:#8e939b">100</div>
<div class="m" style="left:92.5px;top:489.68px;font-size:20px;line-height:20px"><span style="color:#4c566a"></span><span style="color:#7d8799">#&#x27;</span><span style="color:#616e88"><span style="color:#4c566a">·</span></span><span style="color:#81a1c1">@export</span><span style="color:#434b5a">¬</span></div>
<div class="m" style="left:29.5px;top:513.68px;width:36px;text-align:right;font-size:20px;line-height:20px;color:#8e939b">101</div>
<svg class="a" style="left:71px;top:520px" width="9" height="6"><path d="M0.5 0.5H8.5L4.5 5.5Z" fill="#9c9d9f"/></svg>
<svg class="a" style="left:344.5px;top:509px" width="24" height="24"><path d="M3 13.7H22.5M9 7.7L3 13.7L9 19.7" stroke="#81a1c1" stroke-width="1.7" fill="none"/></svg>
<div class="m" style="left:92.5px;top:513.68px;font-size:20px;line-height:20px"><span style="color:#4c566a"></span><span style="color:#e0e5ee">remove_rstudiothemes<span style="color:#4c566a">·</span></span><span style="display:inline-block;width:24px;height:1px"></span><span style="color:#e0e5ee"><span style="color:#4c566a">·</span></span><span style="color:#81a1c1">function</span><span style="color:#ee7a8a">(</span><span style="color:#e0e5ee">style<span style="color:#4c566a">·</span></span><span style="color:#81a1c1">=</span><span style="color:#e0e5ee"><span style="color:#4c566a">·</span>c</span><span style="color:#e5a050">(</span><span style="color:#a3be8c">&quot;all&quot;</span><span style="color:#e0e5ee">,<span style="color:#4c566a">·</span></span><span style="color:#a3be8c">&quot;dark&quot;</span><span style="color:#e0e5ee">,<span style="color:#4c566a">·</span></span><span style="color:#a3be8c">&quot;light&quot;</span><span style="color:#e5a050">)</span><span style="color:#ee7a8a">)</span><span style="color:#e0e5ee"><span style="color:#4c566a">·</span></span><span style="color:#ee7a8a">{</span><span style="color:#434b5a">¬</span></div>
<div class="m" style="left:29.5px;top:537.68px;width:36px;text-align:right;font-size:20px;line-height:20px;color:#8e939b">102</div>
<div class="m" style="left:92.5px;top:537.68px;font-size:20px;line-height:20px"><span style="color:#4c566a">··</span><span style="color:#616e88">#<span style="color:#4c566a">·</span>Only<span style="color:#4c566a">·</span>works<span style="color:#4c566a">·</span>in<span style="color:#4c566a">·</span>RStudio</span><span style="color:#434b5a">¬</span></div>
<div class="m" style="left:29.5px;top:561.68px;width:36px;text-align:right;font-size:20px;line-height:20px;color:#8e939b">103</div>
<svg class="a" style="left:71px;top:568px" width="9" height="6"><path d="M0.5 0.5H8.5L4.5 5.5Z" fill="#9c9d9f"/></svg>
<div class="m" style="left:92.5px;top:561.68px;font-size:20px;line-height:20px"><span style="color:#4c566a">··</span><span style="color:#81a1c1">if</span><span style="color:#e0e5ee"><span style="color:#4c566a">·</span></span><span style="color:#e5a050">(</span><span style="color:#e0e5ee">!on_rstudio</span><span style="color:#a8c650">()</span><span style="color:#e5a050">)</span><span style="color:#e0e5ee"><span style="color:#4c566a">·</span></span><span style="color:#e5a050">{</span><span style="color:#434b5a">¬</span></div>
<div class="m" style="left:29.5px;top:585.68px;width:36px;text-align:right;font-size:20px;line-height:20px;color:#8e939b">104</div>
<svg class="a" style="left:188.5px;top:581px" width="24" height="24"><path d="M3 13.7H22.5M9 7.7L3 13.7L9 19.7" stroke="#81a1c1" stroke-width="1.7" fill="none"/></svg>
<div class="m" style="left:92.5px;top:585.68px;font-size:20px;line-height:20px"><span style="color:#4c566a">····</span><span style="color:#e0e5ee">gui<span style="color:#4c566a">·</span></span><span style="display:inline-block;width:24px;height:1px"></span><span style="color:#e0e5ee"><span style="color:#4c566a">·</span>detect_gui</span><span style="color:#a8c650">()</span><span style="color:#e0e5ee"><span style="color:#4c566a">·</span></span><span style="color:#616e88">#<span style="color:#4c566a">·</span>nolint</span><span style="color:#434b5a">¬</span></div>
</div>
<svg class="a" style="left:0;top:0" width="1920" height="936" viewBox="0 0 1920 936"><path d="M287 599.5L289 598L291 600.5L293 598L295 600.5L297 598L299 600.5L301 598L303 600.5L305 598L307 600.5L309 598L311 600.5L313 598L315 600.5L317 598L319 600.5L321 598L323 600.5L325 598L327 600.5L329 598L331 600.5L333 598L335 600.5L337 598L339 600.5L341 598L343 600.5L345 598L347 600.5L349 598L351 600.5L353 598L355 600.5L357 598L359 600.5L361 598L363 600.5L365 598L367 600.5L369 598L371 600.5L373 598L375 600.5L377 598L379 600.5L381 598L383 600.5L385 598L387 600.5L389 598L391 600.5L393 598L395 600.5L397 598L399 600.5L401 598L403 600.5L405 598L407 600.5L409 598L411 600.5L413 598L415 600.5L417 598L419 600.5L421 598L423 600.5L425 598L427 600.5L429 598L431 600.5L433 598L435 600.5L437 598L439 600.5" stroke="#c9a040" stroke-width="1" fill="none"/></svg>
<div class="a" style="left:13px;top:708px;width:1408px;height:23px;background:#3b4150;"></div>
<div class="a" style="left:97px;top:708px;width:1px;height:23px;background:#101e2f;"></div>
<div class="a" style="left:1331px;top:708px;width:1px;height:23px;background:#101e2f;"></div>
<div class="t" style="left:42.00px;top:712.34px;font-size:17.200px;line-height:17.200px;color:#e5e9f0;">1:1</div>
<div class="t" style="left:106.00px;top:712.34px;font-size:17.200px;line-height:17.200px;color:#e5e9f0;transform:scaleX(0.9049);transform-origin:0 0;">(Top Level)</div>
<svg class="a" style="left:190px;top:715px;" width="10" height="13" viewBox="0 0 10 13"><path d="M1 5L5 1L9 5Z M1 8L5 12L9 8Z" fill="#9a9590"/></svg>
<div class="t" style="left:1340.00px;top:712.34px;font-size:17.200px;line-height:17.200px;color:#e5e9f0;transform:scaleX(0.8992);transform-origin:0 0;">R Script</div>
<svg class="a" style="left:1404px;top:715px;" width="10" height="13" viewBox="0 0 10 13"><path d="M1 5L5 1L9 5Z M1 8L5 12L9 8Z" fill="#9a9590"/></svg>
<div class="a" style="left:12px;top:743px;width:1410px;height:183px;background:#101e2f;border-radius:5px 5px 0 0"></div>
<div class="a" style="left:13px;top:744px;width:1408px;height:33px;background:#2f3541;border-radius:4px 4px 0 0"></div>
<div class="a" style="left:13px;top:744px;width:85px;height:33px;background:#3b4150;border-top-left-radius:4px"></div>
<div class="a" style="left:98px;top:744px;width:1px;height:33px;background:#101e2f;"></div>
<div class="a" style="left:99px;top:744px;width:108px;height:34px;background:#4d5360"></div>
<div class="a" style="left:207px;top:744px;width:1px;height:33px;background:#101e2f;"></div>
<div class="a" style="left:208px;top:744px;width:104px;height:33px;background:#3b4150"></div>
<div class="a" style="left:312px;top:744px;width:1px;height:33px;background:#101e2f;"></div>
<div class="a" style="left:313px;top:744px;width:171px;height:33px;background:#3b4150;border-top-right-radius:3px"></div>
<div class="a" style="left:484px;top:744px;width:1px;height:33px;background:#101e2f;"></div>
<div class="t" style="left:26.00px;top:753.34px;font-size:17.200px;line-height:17.200px;color:#e5e9f0;transform:scaleX(0.9349);transform-origin:0 0;">Console</div>
<div class="t" style="left:112.00px;top:753.34px;font-size:17.200px;line-height:17.200px;color:#e5e9f0;font-style:italic;transform:scaleX(0.9338);transform-origin:0 0;">Terminal</div>
<svg class="a" style="left:182px;top:756px;" width="10" height="10" viewBox="0 0 10 10"><path d="M1.5 1.5L8.5 8.5M8.5 1.5L1.5 8.5" stroke="#7a7873" stroke-width="2.7"/></svg>
<div class="t" style="left:221.00px;top:753.34px;font-size:17.200px;line-height:17.200px;color:#e5e9f0;transform:scaleX(0.9337);transform-origin:0 0;">Markers</div>
<svg class="a" style="left:287px;top:756px;" width="10" height="10" viewBox="0 0 10 10"><path d="M1.5 1.5L8.5 8.5M8.5 1.5L1.5 8.5" stroke="#7a7873" stroke-width="2.7"/></svg>
<div class="t" style="left:327.00px;top:753.34px;font-size:17.200px;line-height:17.200px;color:#e5e9f0;transform:scaleX(0.9254);transform-origin:0 0;">Background Jobs</div>
<svg class="a" style="left:458px;top:756px;" width="10" height="10" viewBox="0 0 10 10"><path d="M1.5 1.5L8.5 8.5M8.5 1.5L1.5 8.5" stroke="#7a7873" stroke-width="2.7"/></svg>
<svg class="a" style="left:1359px;top:763px;" width="22" height="10" viewBox="0 0 22 10"><path d="M0 9.6V2.5Q0 0.5 2 0.5H19Q21 0.5 21 2.5V9.6Z" fill="#8a9199"/><rect x="1.4" y="5" width="18.2" height="2.6" fill="#2f3541"/></svg>
<svg class="a" style="left:1386px;top:754px;" width="22" height="19" viewBox="0 0 22 19"><path d="M0 18.6V2.3Q0 0.3 2 0.3H19Q21 0.3 21 2.3V18.6Z" fill="#8a9199"/><rect x="1.5" y="5" width="18" height="11.8" fill="#2f3541"/></svg>
<div class="a" style="left:13px;top:778px;width:1408px;height:32px;background:#3e4451;"></div>
<svg class="a" style="left:23px;top:786px;" width="64" height="20" viewBox="0 0 64 20"><path d="M1 10L10 2V6H22V14H10V18Z" fill="#5b6a78"/><path d="M62 10L53 2V6H41V14H53V18Z" fill="#5b6a78"/></svg>
<div class="a" style="left:95px;top:784px;width:3px;height:25px;background:linear-gradient(90deg,#000 0,#000 1.4px,rgba(160,168,180,0.3) 1.4px,rgba(160,168,180,0.3) 2.4px,transparent 2.4px);-webkit-mask-image:linear-gradient(180deg,transparent 0,#000 22%,#000 78%,transparent 100%)"></div>
<div class="t" style="left:109.00px;top:790.34px;font-size:17.200px;line-height:17.200px;color:#e5e9f0;transform:scaleX(0.9327);transform-origin:0 0;">Terminal 1</div>
<svg class="a" style="left:193px;top:795px;" width="9" height="5" viewBox="0 0 9 5"><path d="M0.3 0.3H8.7L4.5 4.7Z" fill="#e4e6ea"/></svg>
<div class="a" style="left:214px;top:784px;width:3px;height:25px;background:linear-gradient(90deg,#000 0,#000 1.4px,rgba(160,168,180,0.3) 1.4px,rgba(160,168,180,0.3) 2.4px,transparent 2.4px);-webkit-mask-image:linear-gradient(180deg,transparent 0,#000 22%,#000 78%,transparent 100%)"></div>
<div class="t" style="left:233.00px;top:788.34px;font-size:17.200px;line-height:17.200px;color:#e5e9f0;transform:scaleX(0.9696);transform-origin:0 0;">MINGW64:/c/Users/diego/Documents/R/Projects/rstudiothemes</div>
<svg class="a" style="left:1366px;top:784px;" width="30" height="24" viewBox="0 0 30 24"><path d="M27.3 1.5L18 10.8" stroke="#b8bcc0" stroke-width="2.4" stroke-linecap="round"/><path d="M15.5 9.5L20 13.5Q17.5 19.5 13.5 22L6 22.5Q3 21.5 1 20Q8 17 15.5 9.5Z" fill="#bfc3c8"/><path d="M6 18L15 13M8 20.5L17 15M12 21.5L18.5 16" stroke="#9aa0a6" stroke-width="0.6"/></svg>
<svg class="a" style="left:1403px;top:790px;" width="11" height="11" viewBox="0 0 11 11"><path d="M1.5 1.5L9 9M9 1.5L1.5 9" stroke="#7a7873" stroke-width="2.7"/></svg>
<div class="a" style="left:13px;top:811px;width:1408px;height:114px;background:#2e3440;"></div>
<div class="m" style="left:22px;top:815.96px;font-size:18.333px;line-height:18.333px"><span style="color:#8ae23a">diego@LAPTOP-R4A1HQ7N</span><span style="color:#8ae23a"> </span><span style="color:#f060e8">MINGW64</span><span style="color:#8ae23a"> </span><span style="color:#ebe48a">~/Documents/R/Projects/rstudiothemes</span><span style="color:#a8b0f0"> (main)</span></div>
<div class="m" style="left:22px;top:867.96px;font-size:18.333px;line-height:18.333px"><span style="color:#8ae23a">diego@LAPTOP-R4A1HQ7N</span><span style="color:#8ae23a"> </span><span style="color:#f060e8">MINGW64</span><span style="color:#8ae23a"> </span><span style="color:#ebe48a">~/Documents/R/Projects/rstudiothemes</span><span style="color:#a8b0f0"> (main)</span></div>
<div class="m" style="left:22px;top:893.96px;font-size:18.333px;line-height:18.333px"><span style="color:#d8dee9">$</span></div>
<div class="a" style="left:44px;top:889px;width:12px;height:26px;border:2px solid #d8dee9"></div>
<div class="a" style="left:1433px;top:47px;width:475px;height:345px;background:#101e2f;border-radius:5px 5px 0 0"></div>
<div class="a" style="left:1434px;top:48px;width:473px;height:33px;background:#2f3541;border-radius:4px 4px 0 0"></div>
<div class="a" style="left:1434px;top:48px;width:118px;height:33px;background:#3b4150;border-top-left-radius:4px;"></div>
<div class="a" style="left:1552px;top:48px;width:1px;height:33px;background:#101e2f;"></div>
<div class="t" style="left:1447.00px;top:57.34px;font-size:17.200px;line-height:17.200px;color:#e5e9f0;transform:scaleX(0.9528);transform-origin:0 0;">Environment</div>
<div class="a" style="left:1553px;top:48px;width:78px;height:33px;background:#3b4150;"></div>
<div class="a" style="left:1631px;top:48px;width:1px;height:33px;background:#101e2f;"></div>
<div class="t" style="left:1566.00px;top:57.34px;font-size:17.200px;line-height:17.200px;color:#e5e9f0;transform:scaleX(0.9717);transform-origin:0 0;">History</div>
<div class="a" style="left:1632px;top:48px;width:117px;height:33px;background:#3b4150;"></div>
<div class="a" style="left:1749px;top:48px;width:1px;height:33px;background:#101e2f;"></div>
<div class="t" style="left:1645.00px;top:57.34px;font-size:17.200px;line-height:17.200px;color:#e5e9f0;transform:scaleX(0.9622);transform-origin:0 0;">Connections</div>
<div class="a" style="left:1750px;top:48px;width:63px;height:33px;background:#3b4150;"></div>
<div class="a" style="left:1813px;top:48px;width:1px;height:33px;background:#101e2f;"></div>
<div class="t" style="left:1764.00px;top:57.34px;font-size:17.200px;line-height:17.200px;color:#e5e9f0;transform:scaleX(0.9151);transform-origin:0 0;">Build</div>
<div class="a" style="left:1814px;top:48px;width:15px;height:34px;background:#4d5360;"></div>
<div class="a" style="left:1829px;top:81px;width:78px;height:1px;background:#4b515d;"></div>
<svg class="a" style="left:1845px;top:67px;" width="22" height="10" viewBox="0 0 22 10"><path d="M0 9.6V2.5Q0 0.5 2 0.5H19Q21 0.5 21 2.5V9.6Z" fill="#8a9199"/><rect x="1.4" y="5" width="18.2" height="2.6" fill="#2f3541"/></svg>
<svg class="a" style="left:1872px;top:58px;" width="22" height="19" viewBox="0 0 22 19"><path d="M0 18.6V2.3Q0 0.3 2 0.3H19Q21 0.3 21 2.3V18.6Z" fill="#8a9199"/><rect x="1.5" y="5" width="18" height="11.8" fill="#2f3541"/></svg>
<div class="a" style="left:1434px;top:82px;width:473px;height:32px;background:#3e4451;"></div>
<svg class="a" style="left:1448px;top:90px;" width="19" height="20" viewBox="0 0 19 20"><rect x="1" y="1" width="16" height="17" rx="2" fill="#e6e6e6"/><rect x="3" y="4" width="12" height="4" fill="#e8a0a8"/><rect x="3" y="10" width="12" height="4" fill="#70c070"/></svg>
<div class="a" style="left:1479px;top:87px;width:3px;height:24px;background:linear-gradient(90deg,#000 0,#000 1.4px,rgba(160,168,180,0.3) 1.4px,rgba(160,168,180,0.3) 2.4px,transparent 2.4px);-webkit-mask-image:linear-gradient(180deg,transparent 0,#000 22%,#000 78%,transparent 100%)"></div>
<svg class="a" style="left:1492px;top:88px;" width="22" height="22" viewBox="0 0 22 22"><rect x="6" y="1" width="14" height="16" fill="#f4f4f4" stroke="#c8c8c8" stroke-width="0.8"/><rect x="1" y="5" width="15" height="16" fill="#eeeeee" stroke="#c8c8c8" stroke-width="0.8"/><path d="M4 13L7 17L13 8" stroke="#2a9a2a" stroke-width="2" fill="none"/></svg>
<div class="a" style="left:1525px;top:87px;width:3px;height:24px;background:linear-gradient(90deg,#000 0,#000 1.4px,rgba(160,168,180,0.3) 1.4px,rgba(160,168,180,0.3) 2.4px,transparent 2.4px);-webkit-mask-image:linear-gradient(180deg,transparent 0,#000 22%,#000 78%,transparent 100%)"></div>
<svg class="a" style="left:1541px;top:89px;" width="20" height="22" viewBox="0 0 20 22"><path d="M5 1H15V11H19L10 21L1 11H5Z" fill="#28a8c0"/></svg>
<svg class="a" style="left:1572px;top:99px;" width="9" height="5" viewBox="0 0 9 5"><path d="M0.3 0.3H8.7L4.5 4.7Z" fill="#e4e6ea"/></svg>
<div class="a" style="left:1585px;top:87px;width:3px;height:24px;background:linear-gradient(90deg,#000 0,#000 1.4px,rgba(160,168,180,0.3) 1.4px,rgba(160,168,180,0.3) 2.4px,transparent 2.4px);-webkit-mask-image:linear-gradient(180deg,transparent 0,#000 22%,#000 78%,transparent 100%)"></div>
<svg class="a" style="left:1600px;top:89px;" width="20" height="22" viewBox="0 0 20 22"><path d="M10 1L19 11H15V21H5V11H1Z" fill="#20b050"/></svg>
<div class="a" style="left:1632px;top:87px;width:3px;height:24px;background:linear-gradient(90deg,#000 0,#000 1.4px,rgba(160,168,180,0.3) 1.4px,rgba(160,168,180,0.3) 2.4px,transparent 2.4px);-webkit-mask-image:linear-gradient(180deg,transparent 0,#000 22%,#000 78%,transparent 100%)"></div>
<svg class="a" style="left:1647px;top:89px;" width="22" height="22" viewBox="0 0 22 22"><circle cx="11" cy="11" r="10" fill="#e8e8e8" stroke="#c0c0c0" stroke-width="0.8"/><path d="M11 4V11H16" stroke="#111" stroke-width="1.8" fill="none"/><path d="M11 11L5 16" stroke="#e04040" stroke-width="1"/></svg>
<div class="a" style="left:1682px;top:87px;width:3px;height:24px;background:linear-gradient(90deg,#000 0,#000 1.4px,rgba(160,168,180,0.3) 1.4px,rgba(160,168,180,0.3) 2.4px,transparent 2.4px);-webkit-mask-image:linear-gradient(180deg,transparent 0,#000 22%,#000 78%,transparent 100%)"></div>
<svg class="a" style="left:1693px;top:88px;" width="22" height="22" viewBox="0 0 22 22"><defs><radialGradient id="gg" cx="0.35" cy="0.3" r="0.8"><stop offset="0" stop-color="#8fe0f0"/><stop offset="0.6" stop-color="#3aa8d0"/><stop offset="1" stop-color="#2a88b8"/></radialGradient></defs><path d="M17.88 8.87 L21.14 9.20 L21.14 12.80 L17.88 13.13 L17.37 14.36 L19.45 16.90 L16.90 19.45 L14.36 17.37 L13.13 17.88 L12.80 21.14 L9.20 21.14 L8.87 17.88 L7.64 17.37 L5.10 19.45 L2.55 16.90 L4.63 14.36 L4.12 13.13 L0.86 12.80 L0.86 9.20 L4.12 8.87 L4.63 7.64 L2.55 5.10 L5.10 2.55 L7.64 4.63 L8.87 4.12 L9.20 0.86 L12.80 0.86 L13.13 4.12 L14.36 4.63 L16.90 2.55 L19.45 5.10 L17.37 7.64Z" fill="url(#gg)"/><circle cx="11" cy="11" r="3.3" fill="#3a3f4a"/></svg>
<svg class="a" style="left:1726px;top:100px;" width="9" height="5" viewBox="0 0 9 5"><path d="M0.3 0.3H8.7L4.5 4.7Z" fill="#e4e6ea"/></svg>
<svg class="a" style="left:1744px;top:90px;" width="25" height="20" viewBox="0 0 25 20"><rect x="1" y="1" width="9" height="7" fill="#b090c8"/><rect x="13" y="12" width="10" height="6" fill="#b090c8"/><path d="M5.5 8V11" stroke="#b090c8" stroke-width="1"/><path d="M5.5 11L8.5 14L5.5 17L2.5 14Z" fill="#e6e6e6"/><path d="M8.5 14H13" stroke="#b090c8" stroke-width="1"/></svg>
<div class="a" style="left:1776px;top:87px;width:3px;height:24px;background:linear-gradient(90deg,#000 0,#000 1.4px,rgba(160,168,180,0.3) 1.4px,rgba(160,168,180,0.3) 2.4px,transparent 2.4px);-webkit-mask-image:linear-gradient(180deg,transparent 0,#000 22%,#000 78%,transparent 100%)"></div>
<div class="t" style="left:1791.00px;top:94.34px;font-size:17.200px;line-height:17.200px;color:#e5e9f0;transform:scaleX(0.9388);transform-origin:0 0;">main</div>
<svg class="a" style="left:1837px;top:100px;" width="9" height="5" viewBox="0 0 9 5"><path d="M0.3 0.3H8.7L4.5 4.7Z" fill="#e4e6ea"/></svg>
<div class="a" style="left:1856px;top:87px;width:3px;height:24px;background:linear-gradient(90deg,#000 0,#000 1.4px,rgba(160,168,180,0.3) 1.4px,rgba(160,168,180,0.3) 2.4px,transparent 2.4px);-webkit-mask-image:linear-gradient(180deg,transparent 0,#000 22%,#000 78%,transparent 100%)"></div>
<svg class="a" style="left:1868px;top:89px;" width="22" height="22" viewBox="0 0 22 22"><path d="M18 13.5A7.6 7.6 0 1 1 14.2 5.2" stroke="#c8ccd2" stroke-width="4.4" fill="none"/><path d="M10.5 0.5L21 1.5L19.5 11Z" fill="#c8ccd2"/></svg>
<svg class="a" style="left:1897px;top:100px;" width="9" height="5" viewBox="0 0 9 5"><path d="M0.3 0.3H8.7L4.5 4.7Z" fill="#e4e6ea"/></svg>
<div class="a" style="left:1434px;top:115px;width:473px;height:25px;background:#3b4150;"></div>
<div class="a" style="left:1434px;top:140px;width:473px;height:1px;background:#5a606c;"></div>
<div class="a" style="left:1502px;top:115px;width:1px;height:25px;background:#555b66;"></div>
<div class="a" style="left:1586px;top:115px;width:1px;height:25px;background:#555b66;"></div>
<div class="t" style="left:1437.00px;top:120.34px;font-size:17.200px;line-height:17.200px;color:#e5e9f0;transform:scaleX(0.8988);transform-origin:0 0;">Staged</div>
<div class="t" style="left:1505.00px;top:120.34px;font-size:17.200px;line-height:17.200px;color:#e5e9f0;transform:scaleX(0.9228);transform-origin:0 0;">Status</div>
<svg class="a" style="left:1593px;top:124px;" width="11" height="6" viewBox="0 0 11 6"><path d="M0 6L5.5 0L11 6Z" fill="#5c636e"/></svg>
<div class="t" style="left:1610.00px;top:120.34px;font-size:17.200px;line-height:17.200px;color:#e5e9f0;transform:scaleX(0.8761);transform-origin:0 0;">Path</div>
<div class="a" style="left:1434px;top:141px;width:473px;height:250px;background:#2e3440;"></div>
<div class="a" style="left:1434px;top:201px;width:473px;height:30px;background:#4b505c;"></div>
<div class="a" style="left:1460px;top:148px;width:16px;height:16px;background:#f2f2f2;border-radius:3px"></div>
<svg class="a" style="left:1551px;top:147px;" width="18" height="18" viewBox="0 0 18 18"><rect width="18" height="18" rx="2" fill="#4f86d9"/><text x="9" y="14" text-anchor="middle" font-family="Liberation Sans" font-size="14.5" fill="#fff" stroke="#fff" stroke-width="0.3">M</text></svg>
<div class="t" style="left:1593.00px;top:147.98px;font-size:18.800px;line-height:18.800px;color:#e5e9f0;transform:scaleX(0.8406);transform-origin:0 0;">DESCRIPTION</div>
<div class="a" style="left:1460px;top:178px;width:16px;height:16px;background:#f2f2f2;border-radius:3px"></div>
<svg class="a" style="left:1551px;top:177px;" width="18" height="18" viewBox="0 0 18 18"><rect width="18" height="18" rx="2" fill="#4f86d9"/><text x="9" y="14" text-anchor="middle" font-family="Liberation Sans" font-size="14.5" fill="#fff" stroke="#fff" stroke-width="0.3">M</text></svg>
<div class="t" style="left:1593.00px;top:177.98px;font-size:18.800px;line-height:18.800px;color:#e5e9f0;transform:scaleX(0.9323);transform-origin:0 0;">codemeta.json</div>
<div class="a" style="left:1460px;top:208px;width:16px;height:16px;background:#f2f2f2;border-radius:3px"></div>
<svg class="a" style="left:1551px;top:207px;" width="18" height="18" viewBox="0 0 18 18"><rect width="18" height="18" rx="2" fill="#4f86d9"/><text x="9" y="14" text-anchor="middle" font-family="Liberation Sans" font-size="14.5" fill="#fff" stroke="#fff" stroke-width="0.3">M</text></svg>
<div class="t" style="left:1593.00px;top:207.98px;font-size:18.800px;line-height:18.800px;color:#e5e9f0;transform:scaleX(0.9050);transform-origin:0 0;">inst/WORDLIST</div>
<div class="a" style="left:1460px;top:238px;width:16px;height:16px;background:#f2f2f2;border-radius:3px"></div>
<svg class="a" style="left:1551px;top:237px;" width="18" height="18" viewBox="0 0 18 18"><rect width="18" height="18" rx="2" fill="#4f86d9"/><text x="9" y="14" text-anchor="middle" font-family="Liberation Sans" font-size="14.5" fill="#fff" stroke="#fff" stroke-width="0.3">M</text></svg>
<div class="t" style="left:1593.00px;top:237.98px;font-size:18.800px;line-height:18.800px;color:#e5e9f0;transform:scaleX(0.9531);transform-origin:0 0;">man/rstudiothemes-actions.Rd</div>
<div class="a" style="left:1460px;top:268px;width:16px;height:16px;background:#f2f2f2;border-radius:3px"></div>
<svg class="a" style="left:1551px;top:267px;" width="18" height="18" viewBox="0 0 18 18"><rect width="18" height="18" rx="2" fill="#4f86d9"/><text x="9" y="14" text-anchor="middle" font-family="Liberation Sans" font-size="14.5" fill="#fff" stroke="#fff" stroke-width="0.3">M</text></svg>
<div class="t" style="left:1593.00px;top:267.98px;font-size:18.800px;line-height:18.800px;color:#e5e9f0;transform:scaleX(0.9477);transform-origin:0 0;">man/chunks/themes.Rmd</div>
<div class="a" style="left:1460px;top:298px;width:16px;height:16px;background:#f2f2f2;border-radius:3px"></div>
<svg class="a" style="left:1521px;top:297px;" width="18" height="18" viewBox="0 0 18 18"><rect width="18" height="18" rx="2" fill="#f0c83a"/><text x="9" y="14" text-anchor="middle" font-family="Liberation Sans" font-size="13" fill="#fff">?</text></svg>
<svg class="a" style="left:1551px;top:297px;" width="18" height="18" viewBox="0 0 18 18"><rect width="18" height="18" rx="2" fill="#f0c83a"/><text x="9" y="14" text-anchor="middle" font-family="Liberation Sans" font-size="13" fill="#fff">?</text></svg>
<div class="t" style="left:1593.00px;top:297.98px;font-size:18.800px;line-height:18.800px;color:#e5e9f0;transform:scaleX(0.9777);transform-origin:0 0;">vignettes/articles/</div>
<div class="a" style="left:1433px;top:402px;width:475px;height:524px;background:#101e2f;border-radius:5px 5px 0 0"></div>
<div class="a" style="left:1434px;top:403px;width:473px;height:33px;background:#2f3541;border-radius:4px 4px 0 0"></div>
<div class="a" style="left:1434px;top:403px;width:57px;height:34px;background:#4d5360;border-top-left-radius:4px;"></div>
<div class="a" style="left:1491px;top:403px;width:1px;height:33px;background:#101e2f;"></div>
<div class="t" style="left:1447.00px;top:413.34px;font-size:17.200px;line-height:17.200px;color:#e5e9f0;font-style:italic;transform:scaleX(0.8536);transform-origin:0 0;">Files</div>
<div class="a" style="left:1492px;top:403px;width:62px;height:33px;background:#3b4150;"></div>
<div class="a" style="left:1554px;top:403px;width:1px;height:33px;background:#101e2f;"></div>
<div class="t" style="left:1506.00px;top:413.34px;font-size:17.200px;line-height:17.200px;color:#e5e9f0;transform:scaleX(0.9153);transform-origin:0 0;">Plots</div>
<div class="a" style="left:1555px;top:403px;width:93px;height:33px;background:#3b4150;"></div>
<div class="a" style="left:1648px;top:403px;width:1px;height:33px;background:#101e2f;"></div>
<div class="t" style="left:1568.00px;top:413.34px;font-size:17.200px;line-height:17.200px;color:#e5e9f0;transform:scaleX(0.8737);transform-origin:0 0;">Packages</div>
<div class="a" style="left:1649px;top:403px;width:60px;height:33px;background:#3b4150;"></div>
<div class="a" style="left:1709px;top:403px;width:1px;height:33px;background:#101e2f;"></div>
<div class="t" style="left:1663.00px;top:413.34px;font-size:17.200px;line-height:17.200px;color:#e5e9f0;transform:scaleX(0.9328);transform-origin:0 0;">Help</div>
<div class="a" style="left:1710px;top:403px;width:76px;height:33px;background:#3b4150;"></div>
<div class="a" style="left:1786px;top:403px;width:1px;height:33px;background:#101e2f;"></div>
<div class="t" style="left:1724.00px;top:413.34px;font-size:17.200px;line-height:17.200px;color:#e5e9f0;transform:scaleX(0.9375);transform-origin:0 0;">Viewer</div>
<div class="a" style="left:1787px;top:403px;width:42px;height:33px;background:#3b4150;overflow:hidden"></div>
<div class="a" style="left:1787px;top:403px;width:42px;height:33px;overflow:hidden"><div class="t" style="left:14px;top:9.78px;font-size:16.8px;line-height:16.8px;color:#e5e9f0">Presentation</div></div>
<svg class="a" style="left:1845px;top:422px;" width="22" height="10" viewBox="0 0 22 10"><path d="M0 9.6V2.5Q0 0.5 2 0.5H19Q21 0.5 21 2.5V9.6Z" fill="#8a9199"/><rect x="1.4" y="5" width="18.2" height="2.6" fill="#2f3541"/></svg>
<svg class="a" style="left:1872px;top:413px;" width="22" height="19" viewBox="0 0 22 19"><path d="M0 18.6V2.3Q0 0.3 2 0.3H19Q21 0.3 21 2.3V18.6Z" fill="#8a9199"/><rect x="1.5" y="5" width="18" height="11.8" fill="#2f3541"/></svg>
<div class="a" style="left:1434px;top:437px;width:473px;height:32px;background:#3e4451;"></div>
<svg class="a" style="left:1442px;top:443px;" width="32" height="24" viewBox="0 0 32 24"><defs><linearGradient id="fy" x1="0" y1="0" x2="0" y2="1"><stop offset="0" stop-color="#f0dc90"/><stop offset="1" stop-color="#d8b048"/></linearGradient></defs><path d="M15.5 3.2Q15.5 2.6 16.5 2.6H27Q29 2.6 29 4.6V22H15.5Z" fill="#dcdcd6" stroke="#c8a850" stroke-width="0.8"/><path d="M5.5 8.5H28.5V22H5.5Z" fill="url(#fy)" stroke="#c09838" stroke-width="0.7"/><circle cx="8.5" cy="9.5" r="7.6" fill="#1a9a60"/><path d="M8.5 4.8V14.2M3.8 9.5H13.2" stroke="#f2f2f2" stroke-width="2.8"/></svg>
<div class="a" style="left:1479px;top:442px;width:3px;height:24px;background:linear-gradient(90deg,#000 0,#000 1.4px,rgba(160,168,180,0.3) 1.4px,rgba(160,168,180,0.3) 2.4px,transparent 2.4px);-webkit-mask-image:linear-gradient(180deg,transparent 0,#000 22%,#000 78%,transparent 100%)"></div>
<svg class="a" style="left:1489px;top:443px;" width="30" height="24" viewBox="0 0 30 24"><rect x="8" y="4" width="18" height="19" fill="#e8e8e8"/><circle cx="7.4" cy="9.5" r="7.6" fill="#1a9a60"/><path d="M7.4 4.8V14.2M2.7 9.5H12.1" stroke="#f2f2f2" stroke-width="2.8"/></svg>
<svg class="a" style="left:1524px;top:454px;" width="9" height="5" viewBox="0 0 9 5"><path d="M0.3 0.3H8.7L4.5 4.7Z" fill="#e4e6ea"/></svg>
<div class="a" style="left:1539px;top:442px;width:3px;height:24px;background:linear-gradient(90deg,#000 0,#000 1.4px,rgba(160,168,180,0.3) 1.4px,rgba(160,168,180,0.3) 2.4px,transparent 2.4px);-webkit-mask-image:linear-gradient(180deg,transparent 0,#000 22%,#000 78%,transparent 100%)"></div>
<svg class="a" style="left:1548px;top:443px;" width="30" height="24" viewBox="0 0 30 24"><rect x="8.5" y="4" width="17.5" height="19" fill="#e8e8e8"/><circle cx="8.3" cy="9.4" r="7.5" fill="#a81c1c"/><path d="M5.2 6.3L11.4 12.5M11.4 6.3L5.2 12.5" stroke="#f2f2f2" stroke-width="2.6"/></svg>
<svg class="a" style="left:1587px;top:446px;" width="26" height="20" viewBox="0 0 26 20"><rect x="1" y="1" width="15" height="15" fill="#e8e8e8"/><rect x="9" y="4" width="15" height="15" fill="#f0f0f0" stroke="#c8c8c8" stroke-width="0.6"/><path d="M7 9H15V6L21 11L15 16V13H7Z" fill="#1a90d8"/></svg>
<div class="a" style="left:1621px;top:442px;width:3px;height:24px;background:linear-gradient(90deg,#000 0,#000 1.4px,rgba(160,168,180,0.3) 1.4px,rgba(160,168,180,0.3) 2.4px,transparent 2.4px);-webkit-mask-image:linear-gradient(180deg,transparent 0,#000 22%,#000 78%,transparent 100%)"></div>
<svg class="a" style="left:1636px;top:443px;" width="22" height="22" viewBox="0 0 22 22"><defs><radialGradient id="gg" cx="0.35" cy="0.3" r="0.8"><stop offset="0" stop-color="#8fe0f0"/><stop offset="0.6" stop-color="#3aa8d0"/><stop offset="1" stop-color="#2a88b8"/></radialGradient></defs><path d="M17.88 8.87 L21.14 9.20 L21.14 12.80 L17.88 13.13 L17.37 14.36 L19.45 16.90 L16.90 19.45 L14.36 17.37 L13.13 17.88 L12.80 21.14 L9.20 21.14 L8.87 17.88 L7.64 17.37 L5.10 19.45 L2.55 16.90 L4.63 14.36 L4.12 13.13 L0.86 12.80 L0.86 9.20 L4.12 8.87 L4.63 7.64 L2.55 5.10 L5.10 2.55 L7.64 4.63 L8.87 4.12 L9.20 0.86 L12.80 0.86 L13.13 4.12 L14.36 4.63 L16.90 2.55 L19.45 5.10 L17.37 7.64Z" fill="url(#gg)"/><circle cx="11" cy="11" r="3.3" fill="#3a3f4a"/></svg>
<svg class="a" style="left:1669px;top:454px;" width="9" height="5" viewBox="0 0 9 5"><path d="M0.3 0.3H8.7L4.5 4.7Z" fill="#e4e6ea"/></svg>
<svg class="a" style="left:1877px;top:442px;" width="22" height="22" viewBox="0 0 22 22"><path d="M18 13.5A7.6 7.6 0 1 1 14.2 5.2" stroke="#c8ccd2" stroke-width="4.4" fill="none"/><path d="M10.5 0.5L21 1.5L19.5 11Z" fill="#c8ccd2"/></svg>
<div class="a" style="left:1434px;top:470px;width:473px;height:31px;background:#3b4150;"></div>
<div class="a" style="left:1441px;top:478px;width:17px;height:17px;background:#d8dee9;border-radius:3px"></div>
<div class="a" style="left:1465px;top:471px;width:32px;height:30px;background:radial-gradient(ellipse at 30% 20%,#556270 0%,#4a5563 45%,rgba(59,65,80,0) 100%)"></div>
<svg class="a" style="left:1467px;top:473px;" width="26" height="24" viewBox="0 0 26 24"><defs><linearGradient id="hg" x1="0" y1="0" x2="0" y2="1"><stop offset="0" stop-color="#b0b6bc"/><stop offset="1" stop-color="#6e767e"/></linearGradient></defs><path d="M4.5 11.5L13 3.5L21.5 11.5V23H4.5Z" fill="url(#hg)"/><path d="M1.8 12.5L13 2.2L24 12.5" stroke="#b04438" stroke-width="1.8" fill="none"/><rect x="10.8" y="14.5" width="5" height="8.5" fill="#8a7258"/></svg>
<div class="t" style="left:1504.00px;top:478.34px;font-size:17.200px;line-height:17.200px;color:#e5e9f0;transform:scaleX(0.9590);transform-origin:0 0;">Home</div>
<svg class="a" style="left:1557px;top:478px;" width="9" height="16" viewBox="0 0 9 16"><path d="M1.3 1.3L7.3 7.5L1.3 13.7" stroke="#dfe3ea" stroke-width="2.5" fill="none"/></svg>
<div class="t" style="left:1573.00px;top:478.34px;font-size:17.200px;line-height:17.200px;color:#e5e9f0;">R</div>
<svg class="a" style="left:1593px;top:478px;" width="9" height="16" viewBox="0 0 9 16"><path d="M1.3 1.3L7.3 7.5L1.3 13.7" stroke="#dfe3ea" stroke-width="2.5" fill="none"/></svg>
<div class="t" style="left:1608.00px;top:478.34px;font-size:17.200px;line-height:17.200px;color:#e5e9f0;transform:scaleX(0.9496);transform-origin:0 0;">Projects</div>
<svg class="a" style="left:1676px;top:478px;" width="9" height="16" viewBox="0 0 9 16"><path d="M1.3 1.3L7.3 7.5L1.3 13.7" stroke="#dfe3ea" stroke-width="2.5" fill="none"/></svg>
<div class="t" style="left:1692.00px;top:478.34px;font-size:17.200px;line-height:17.200px;color:#e5e9f0;transform:scaleX(0.9627);transform-origin:0 0;">rstudiothemes</div>
<svg class="a" style="left:1806px;top:478px;" width="9" height="16" viewBox="0 0 9 16"><path d="M1.3 1.3L7.3 7.5L1.3 13.7" stroke="#dfe3ea" stroke-width="2.5" fill="none"/></svg>
<div class="t" style="left:1823.00px;top:478.34px;font-size:17.200px;line-height:17.200px;color:#e5e9f0;">R</div>
<svg class="a" style="left:1845px;top:474px;" width="23" height="23" viewBox="0 0 23 23"><g transform="scale(1.0000)"><path d="M11.5 0.5L22.5 3.3V17.2L11.5 22.5L0.5 17.2V3.3Z" fill="#a6cfe0" fill-opacity="0.85" stroke="#5cb6cc" stroke-width="1"/>
<path d="M0.5 3.3L11.5 6L22.5 3.3M11.5 1V22.5M0.5 17.2L11.5 14.5L22.5 17.2" stroke="#6cc0d4" stroke-width="0.6" fill="none" opacity="0.8"/>
<text x="11.8" y="14" text-anchor="middle" font-family="Liberation Serif" font-size="13" fill="#2a5ba8">R</text></g></svg>
<div class="a" style="left:1877px;top:470px;width:1px;height:31px;background:#101e2f;"></div>
<div class="t" style="left:1887.00px;top:479.34px;font-size:17.200px;line-height:17.200px;color:#e5e9f0;transform:scaleX(0.9766);transform-origin:0 0;">...</div>
<div class="a" style="left:1434px;top:502px;width:473px;height:27px;background:#3b4150;"></div>
<div class="a" style="left:1434px;top:529px;width:473px;height:1px;background:#5a606c;"></div>
<div class="a" style="left:1478px;top:502px;width:1px;height:27px;background:#555b66;"></div>
<div class="a" style="left:1517px;top:502px;width:1px;height:27px;background:#555b66;"></div>
<div class="a" style="left:1823px;top:502px;width:1px;height:27px;background:#555b66;"></div>
<svg class="a" style="left:1531px;top:510px;" width="14" height="9" viewBox="0 0 14 9"><path d="M0 9L7 0L14 9Z" fill="#8a909a"/></svg>
<div class="t" style="left:1552.00px;top:509.34px;font-size:17.200px;line-height:17.200px;color:#e5e9f0;transform:scaleX(0.9590);transform-origin:0 0;">Name</div>
<div class="t" style="left:1832.00px;top:509.34px;font-size:17.200px;line-height:17.200px;color:#e5e9f0;transform:scaleX(0.8966);transform-origin:0 0;">Size</div>
<div class="a" style="left:1434px;top:530px;width:473px;height:395px;background:#2e3440;"></div>
<svg class="a" style="left:1490px;top:535px;" width="23" height="22" viewBox="0 0 23 22"><path d="M9.3 0.3L17 9.3H12V15.2H21V20H6V9.3H1.5Z" fill="#2eb36a"/><path d="M9.3 0.3L1.5 9.3H6V20H9.3Z" fill="#4cc284" opacity="0.6"/></svg>
<div class="t" style="left:1526.00px;top:540.51px;font-size:17.000px;line-height:17.000px;color:#c8cfee;">..</div>
<svg class="a" style="left:1451px;top:574px;" width="18" height="18" viewBox="0 0 18 18"><rect width="18" height="18" rx="4" fill="#d8dee9"/></svg>
<svg class="a" style="left:1490px;top:570px;" width="22" height="22" viewBox="0 0 22 22"><path d="M4 0H15.5L22 6.5V21H4Z" fill="#e6e6e6"/><path d="M15.5 0V6.5H22" fill="#c4c4c4"/><circle cx="6.5" cy="9.2" r="6.3" fill="#4a70a0"/><text x="6.5" y="13" text-anchor="middle" font-family="Liberation Sans" font-size="10.5" fill="#eef2f6">R</text></svg>
<div class="t" style="left:1526.00px;top:575.15px;font-size:18.600px;line-height:18.600px;color:#c8cfee;transform:scaleX(0.9833);transform-origin:0 0;">convert-tm-to-vs.R</div>
<div class="t" style="left:1847.00px;top:574.90px;font-size:18.900px;line-height:18.900px;color:#e5e9f0;transform:scaleX(0.9066);transform-origin:0 0;">11.5 KB</div>
<svg class="a" style="left:1451px;top:609px;" width="18" height="18" viewBox="0 0 18 18"><rect width="18" height="18" rx="4" fill="#d8dee9"/></svg>
<svg class="a" style="left:1490px;top:605px;" width="22" height="22" viewBox="0 0 22 22"><path d="M4 0H15.5L22 6.5V21H4Z" fill="#e6e6e6"/><path d="M15.5 0V6.5H22" fill="#c4c4c4"/><circle cx="6.5" cy="9.2" r="6.3" fill="#4a70a0"/><text x="6.5" y="13" text-anchor="middle" font-family="Liberation Sans" font-size="10.5" fill="#eef2f6">R</text></svg>
<div class="t" style="left:1526.00px;top:610.15px;font-size:18.600px;line-height:18.600px;color:#c8cfee;transform:scaleX(0.9716);transform-origin:0 0;">convert-to-rs.R</div>
<div class="t" style="left:1847.00px;top:609.90px;font-size:18.900px;line-height:18.900px;color:#e5e9f0;transform:scaleX(0.9066);transform-origin:0 0;">11.1 KB</div>
<svg class="a" style="left:1451px;top:644px;" width="18" height="18" viewBox="0 0 18 18"><rect width="18" height="18" rx="4" fill="#d8dee9"/></svg>
<svg class="a" style="left:1490px;top:640px;" width="22" height="22" viewBox="0 0 22 22"><path d="M4 0H15.5L22 6.5V21H4Z" fill="#e6e6e6"/><path d="M15.5 0V6.5H22" fill="#c4c4c4"/><circle cx="6.5" cy="9.2" r="6.3" fill="#4a70a0"/><text x="6.5" y="13" text-anchor="middle" font-family="Liberation Sans" font-size="10.5" fill="#eef2f6">R</text></svg>
<div class="t" style="left:1526.00px;top:645.15px;font-size:18.600px;line-height:18.600px;color:#c8cfee;transform:scaleX(0.9833);transform-origin:0 0;">convert-vs-to-tm.R</div>
<div class="t" style="left:1847.00px;top:644.90px;font-size:18.900px;line-height:18.900px;color:#e5e9f0;transform:scaleX(0.8830);transform-origin:0 0;">7.5 KB</div>
<svg class="a" style="left:1451px;top:679px;" width="18" height="18" viewBox="0 0 18 18"><rect width="18" height="18" rx="4" fill="#d8dee9"/><path d="M4 9L7.5 13L14 4" stroke="#111" stroke-width="2.2" fill="none"/></svg>
<svg class="a" style="left:1490px;top:675px;" width="22" height="22" viewBox="0 0 22 22"><path d="M4 0H15.5L22 6.5V21H4Z" fill="#e6e6e6"/><path d="M15.5 0V6.5H22" fill="#c4c4c4"/><circle cx="6.5" cy="9.2" r="6.3" fill="#4a70a0"/><text x="6.5" y="13" text-anchor="middle" font-family="Liberation Sans" font-size="10.5" fill="#eef2f6">R</text></svg>
<div class="t" style="left:1526.00px;top:680.15px;font-size:18.600px;line-height:18.600px;color:#c8cfee;transform:scaleX(0.9618);transform-origin:0 0;">generate-uuid.R</div>
<div class="t" style="left:1847.00px;top:679.90px;font-size:18.900px;line-height:18.900px;color:#e5e9f0;transform:scaleX(0.8830);transform-origin:0 0;">1.9 KB</div>
<svg class="a" style="left:1451px;top:714px;" width="18" height="18" viewBox="0 0 18 18"><rect width="18" height="18" rx="4" fill="#d8dee9"/></svg>
<svg class="a" style="left:1490px;top:710px;" width="22" height="22" viewBox="0 0 22 22"><path d="M4 0H15.5L22 6.5V21H4Z" fill="#e6e6e6"/><path d="M15.5 0V6.5H22" fill="#c4c4c4"/><circle cx="6.5" cy="9.2" r="6.3" fill="#4a70a0"/><text x="6.5" y="13" text-anchor="middle" font-family="Liberation Sans" font-size="10.5" fill="#eef2f6">R</text></svg>
<div class="t" style="left:1526.00px;top:715.15px;font-size:18.600px;line-height:18.600px;color:#c8cfee;transform:scaleX(0.9732);transform-origin:0 0;">on-rstudio.R</div>
<div class="t" style="left:1847.00px;top:714.90px;font-size:18.900px;line-height:18.900px;color:#e5e9f0;transform:scaleX(0.9090);transform-origin:0 0;">853 B</div>
<svg class="a" style="left:1451px;top:749px;" width="18" height="18" viewBox="0 0 18 18"><rect width="18" height="18" rx="4" fill="#d8dee9"/></svg>
<svg class="a" style="left:1490px;top:745px;" width="22" height="22" viewBox="0 0 22 22"><path d="M4 0H15.5L22 6.5V21H4Z" fill="#e6e6e6"/><path d="M15.5 0V6.5H22" fill="#c4c4c4"/><circle cx="6.5" cy="9.2" r="6.3" fill="#4a70a0"/><text x="6.5" y="13" text-anchor="middle" font-family="Liberation Sans" font-size="10.5" fill="#eef2f6">R</text></svg>
<div class="t" style="left:1526.00px;top:750.15px;font-size:18.600px;line-height:18.600px;color:#c8cfee;transform:scaleX(0.9753);transform-origin:0 0;">read-tm-theme.R</div>
<div class="t" style="left:1847.00px;top:749.90px;font-size:18.900px;line-height:18.900px;color:#e5e9f0;transform:scaleX(0.8830);transform-origin:0 0;">5.8 KB</div>
<svg class="a" style="left:1451px;top:784px;" width="18" height="18" viewBox="0 0 18 18"><rect width="18" height="18" rx="4" fill="#d8dee9"/></svg>
<svg class="a" style="left:1490px;top:780px;" width="22" height="22" viewBox="0 0 22 22"><path d="M4 0H15.5L22 6.5V21H4Z" fill="#e6e6e6"/><path d="M15.5 0V6.5H22" fill="#c4c4c4"/><circle cx="6.5" cy="9.2" r="6.3" fill="#4a70a0"/><text x="6.5" y="13" text-anchor="middle" font-family="Liberation Sans" font-size="10.5" fill="#eef2f6">R</text></svg>
<div class="t" style="left:1526.00px;top:785.15px;font-size:18.600px;line-height:18.600px;color:#c8cfee;transform:scaleX(0.9494);transform-origin:0 0;">read-vs-theme.R</div>
<div class="t" style="left:1847.00px;top:784.90px;font-size:18.900px;line-height:18.900px;color:#e5e9f0;transform:scaleX(0.8830);transform-origin:0 0;">5.1 KB</div>
<svg class="a" style="left:1451px;top:819px;" width="18" height="18" viewBox="0 0 18 18"><rect width="18" height="18" rx="4" fill="#d8dee9"/></svg>
<svg class="a" style="left:1490px;top:815px;" width="22" height="22" viewBox="0 0 22 22"><path d="M4 0H15.5L22 6.5V21H4Z" fill="#e6e6e6"/><path d="M15.5 0V6.5H22" fill="#c4c4c4"/><circle cx="6.5" cy="9.2" r="6.3" fill="#4a70a0"/><text x="6.5" y="13" text-anchor="middle" font-family="Liberation Sans" font-size="10.5" fill="#eef2f6">R</text></svg>
<div class="t" style="left:1526.00px;top:820.15px;font-size:18.600px;line-height:18.600px;color:#c8cfee;transform:scaleX(0.9603);transform-origin:0 0;">rstudiothemes-actions.R</div>
<div class="t" style="left:1847.00px;top:819.90px;font-size:18.900px;line-height:18.900px;color:#e5e9f0;transform:scaleX(0.8830);transform-origin:0 0;">8.6 KB</div>
<svg class="a" style="left:1451px;top:854px;" width="18" height="18" viewBox="0 0 18 18"><rect width="18" height="18" rx="4" fill="#d8dee9"/></svg>
<svg class="a" style="left:1490px;top:850px;" width="22" height="22" viewBox="0 0 22 22"><path d="M4 0H15.5L22 6.5V21H4Z" fill="#e6e6e6"/><path d="M15.5 0V6.5H22" fill="#c4c4c4"/><circle cx="6.5" cy="9.2" r="6.3" fill="#4a70a0"/><text x="6.5" y="13" text-anchor="middle" font-family="Liberation Sans" font-size="10.5" fill="#eef2f6">R</text></svg>
<div class="t" style="left:1526.00px;top:855.15px;font-size:18.600px;line-height:18.600px;color:#c8cfee;transform:scaleX(0.9559);transform-origin:0 0;">rstudiothemes-package.R</div>
<div class="t" style="left:1847.00px;top:854.90px;font-size:18.900px;line-height:18.900px;color:#e5e9f0;transform:scaleX(0.9090);transform-origin:0 0;">240 B</div>
<svg class="a" style="left:1451px;top:889px;" width="18" height="18" viewBox="0 0 18 18"><rect width="18" height="18" rx="4" fill="#d8dee9"/></svg>
<svg class="a" style="left:1490px;top:885px;" width="22" height="22" viewBox="0 0 22 22"><path d="M4 0H15.5L22 6.5V21H4Z" fill="#e6e6e6"/><path d="M15.5 0V6.5H22" fill="#c4c4c4"/><circle cx="6.5" cy="9.2" r="6.3" fill="#4a70a0"/><text x="6.5" y="13" text-anchor="middle" font-family="Liberation Sans" font-size="10.5" fill="#eef2f6">R</text></svg>
<div class="t" style="left:1526.00px;top:890.15px;font-size:18.600px;line-height:18.600px;color:#c8cfee;transform:scaleX(0.9211);transform-origin:0 0;">utils.R</div>
<div class="t" style="left:1847.00px;top:889.90px;font-size:18.900px;line-height:18.900px;color:#e5e9f0;transform:scaleX(0.8830);transform-origin:0 0;">3.2 KB</div></body></html>
